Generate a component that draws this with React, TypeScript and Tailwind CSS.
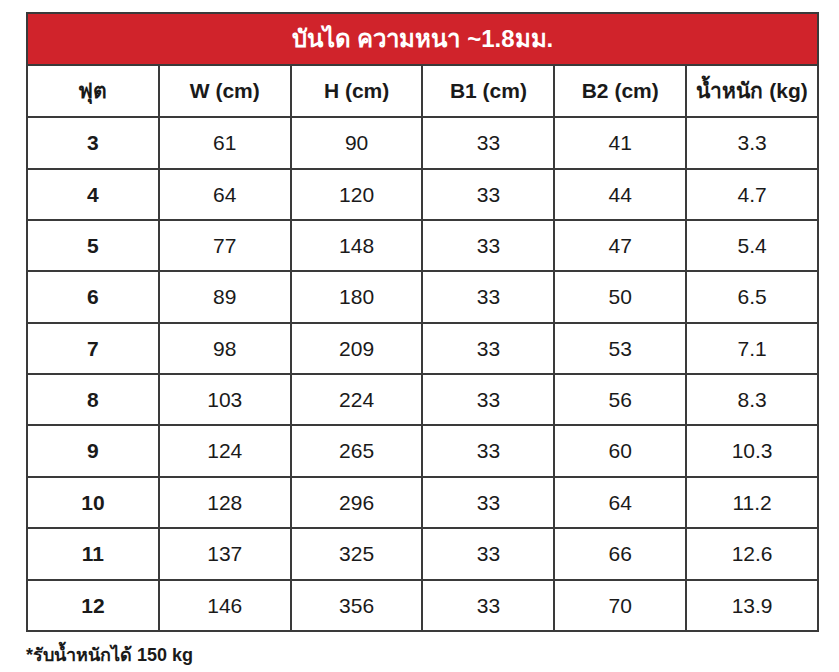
import React from 'react';

const rows = [
  ['3', '61', '90', '33', '41', '3.3'],
  ['4', '64', '120', '33', '44', '4.7'],
  ['5', '77', '148', '33', '47', '5.4'],
  ['6', '89', '180', '33', '50', '6.5'],
  ['7', '98', '209', '33', '53', '7.1'],
  ['8', '103', '224', '33', '56', '8.3'],
  ['9', '124', '265', '33', '60', '10.3'],
  ['10', '128', '296', '33', '64', '11.2'],
  ['11', '137', '325', '33', '66', '12.6'],
  ['12', '146', '356', '33', '70', '13.9'],
];

const heads = ['ฟุต', 'W (cm)', 'H (cm)', 'B1 (cm)', 'B2 (cm)', 'น้ำหนัก (kg)'];

// row heights alternate so the grid lines land where the picture has them
const tall = [true, false, false, true, false, false, true, false, true, false];

export default function App() {
  return (
    <div className="w-[839px] h-[672px] bg-white pl-[26px] pt-[12px] font-['Liberation_Sans',sans-serif] text-[#1a1a1a]">
      <table className="w-[793px] border-collapse table-fixed">
        <thead>
          <tr className="h-[52px]">
            <th colSpan={6} className="bg-[#d0232b] text-white text-[24px] font-bold border-2 border-[#3a3a3a]">
              บันได ความหนา ~1.8มม.
            </th>
          </tr>
          <tr className="h-[52px]">
            {heads.map((h) => (
              <th key={h} className="border-2 border-[#3a3a3a] text-[21px] font-bold">
                {h}
              </th>
            ))}
          </tr>
        </thead>
        <tbody>
          {rows.map((r, ri) => (
            <tr key={r[0]} className={tall[ri] ? 'h-[52px]' : 'h-[51px]'}>
              {r.map((c, i) => (
                <td
                  key={i}
                  className={`border-2 border-[#3a3a3a] text-center text-[21px] ${i === 0 ? 'font-bold' : 'font-normal'}`}
                >
                  {c}
                </td>
              ))}
            </tr>
          ))}
        </tbody>
      </table>
      <p className="mt-[10px] text-[18px] font-bold">*รับน้ำหนักได้ 150 kg</p>
    </div>
  );
}
